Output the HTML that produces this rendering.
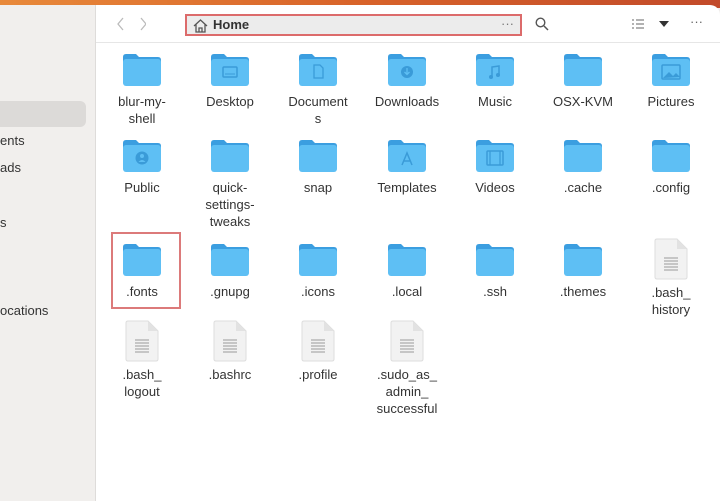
<!DOCTYPE html>
<html><head><meta charset="utf-8"><style>
*{margin:0;padding:0;box-sizing:border-box}
body{width:720px;height:501px;overflow:hidden;position:relative;background:#f0eeec;font-family:"Liberation Sans",sans-serif}
.top{position:absolute;left:0;top:0;width:720px;height:8px;background:linear-gradient(90deg,#e8893a,#d8632a 50%,#c24a2a)}
.side{position:absolute;left:0;top:5px;width:96px;height:496px;background:#f1efed;border-right:1px solid #dedcda}
.sel{position:absolute;left:0;top:96px;width:86px;height:26px;background:#dcdad8;border-radius:0 6px 6px 0}
.st{position:absolute;left:0;font-size:13px;color:#333}
.main{position:absolute;left:96px;top:5px;width:624px;height:496px;background:#fff;border-radius:0 10px 0 0}
.hdr{position:absolute;left:0;top:0;width:624px;height:38px;border-bottom:1px solid #e6e6e6}
.path{position:absolute;left:89px;top:9px;width:337px;height:22px;background:#ececec;border:2px solid #dc6b6b;font-weight:bold;font-size:13px;color:#333;padding:1px 0 0 26px}
.it{position:absolute;width:80px;text-align:center;font-size:13px;color:#333;line-height:17px}
.it svg{display:block;margin:0 auto 6px}
.hl{position:absolute;left:111px;top:232px;width:70px;height:77px;border:2px solid #dc7a7a}
</style></head><body>
<div class="top"></div>
<div class="side">
<div class="sel"></div>
<div class="st" style="top:128px">ents</div>
<div class="st" style="top:155px">ads</div>
<div class="st" style="top:210px">s</div>
<div class="st" style="top:298px">ocations</div>
</div>
<div class="main">
<div class="hdr">
<svg style="position:absolute;left:20px;top:12px" width="30" height="14"><path d="M7 1 2 7 7 13M25 1 30 7 25 13" fill="none" stroke="#bbb" stroke-width="1.3"/></svg>
<div class="path"><svg style="position:absolute;left:6px;top:3px" width="15" height="14"><path d="M1 7 7.5 1 14 7M3 5v8h9V5M6 13V9h3v4" fill="none" stroke="#555" stroke-width="1.3"/></svg>Home<span style="position:absolute;right:6px;top:0;font-weight:normal;color:#777">···</span></div>
<svg style="position:absolute;left:439px;top:12px" width="14" height="14"><circle cx="5.5" cy="5.5" r="4.3" fill="none" stroke="#555" stroke-width="1.4"/><path d="M9 9l4 4" stroke="#555" stroke-width="1.5"/></svg>
<svg style="position:absolute;left:536px;top:14px" width="12" height="10"><path d="M0 1h2M4 1h8M0 5h2M4 5h8M0 9h2M4 9h8" stroke="#666" stroke-width="1"/></svg>
<svg style="position:absolute;left:563px;top:16px" width="10" height="6"><path d="M0 0h10L5 6z" fill="#333"/></svg>
<div style="position:absolute;left:594px;top:9px;font-size:13px;color:#666">···</div>
</div>
</div>
<div class="hl"></div>
<div id="g"></div>
<svg width="0" height="0" style="position:absolute"><defs>
<symbol id="f" viewBox="0 0 40 34"><path d="M1 4q0-3 3-3h10l3 3h19q3 0 3 3v3H1z" fill="#3b9ee0"/><rect x="1" y="6" width="38" height="27" rx="3" fill="#5ebff4"/></symbol>
<symbol id="d" viewBox="0 0 34 42"><path d="M3 1h20l10 10v28q0 2-2 2H3q-2 0-2-2V3q0-2 2-2z" fill="#f2f2f2" stroke="#ddd"/><path d="M23 1v10h10" fill="#e2e2e2"/><path d="M10 20h14M10 23h14M10 26h14M10 29h14M10 32h14" stroke="#999" stroke-width="1"/></symbol>
</defs></svg>
<script>
const cx=[142,230,318,407,495,583,671];
const rows=[[53,["blur-my-<br>shell","Desktop","Document<br>s","Downloads","Music","OSX-KVM","Pictures"]],
[139,["Public","quick-<br>settings-<br>tweaks","snap","Templates","Videos",".cache",".config"]],
[243,[".fonts",".gnupg",".icons",".local",".ssh",".themes","*.bash_<br>history"]],
[325,["*.bash_<br>logout","*.bashrc","*.profile","*.sudo_as_<br>admin_<br>successful"]]];
const glyph={"Desktop":'<rect x="13" y="14" width="14" height="10" rx="1" fill="none" stroke="#3a9bd8" stroke-width="1.5"/><path d="M15 21h10" stroke="#3a9bd8"/>',
"Document<br>s":'<path d="M16 12h6l3 3v10h-9z" fill="none" stroke="#3a9bd8" stroke-width="1.3"/>',
"Downloads":'<circle cx="20" cy="19" r="6" fill="#3a9bd8"/><path d="M20 15v6M17.5 19l2.5 2.5 2.5-2.5" stroke="#5ebff4" fill="none" stroke-width="1.3"/>',
"Music":'<path d="M17 24V14l7-1v9" fill="none" stroke="#3a9bd8" stroke-width="1.5"/><circle cx="16" cy="24" r="2" fill="#3a9bd8"/><circle cx="23" cy="22" r="2" fill="#3a9bd8"/>',
"Pictures":'<rect x="11" y="12" width="18" height="14" rx="1" fill="none" stroke="#3a9bd8" stroke-width="1.5"/><path d="M12 25l6-6 4 4 3-3 4 4" fill="#3a9bd8"/>',
"Public":'<circle cx="20" cy="19" r="6.5" fill="#3a9bd8"/><circle cx="20" cy="17" r="2" fill="#5ebff4"/><path d="M16.5 23q3.5-4 7 0" fill="#5ebff4"/>',
"Templates":'<path d="M15 26l5-12 5 12M17 22h6" fill="none" stroke="#3a9bd8" stroke-width="1.5"/>',
"Videos":'<rect x="12" y="12" width="16" height="14" rx="1" fill="none" stroke="#3a9bd8" stroke-width="1.5"/><path d="M15 12v14M25 12v14" stroke="#3a9bd8" stroke-width="1.3"/>'};
let h="";
rows.forEach(([y,names],ri)=>names.forEach((n,i)=>{
let doc=n[0]=="*";let t=doc?n.slice(1):n;
let svg=doc?`<svg width="34" height="42" style="margin-bottom:4px"><use href="#d"/></svg>`:
`<svg width="40" height="34" viewBox="0 0 40 34"><use href="#f"/>${glyph[n]||""}</svg>`;
let top=doc?y-5:y;
h+=`<div class="it" style="left:${cx[i]-40}px;top:${top}px">${svg}${t}</div>`;}));
document.getElementById("g").innerHTML=h;
</script>
</body></html>
